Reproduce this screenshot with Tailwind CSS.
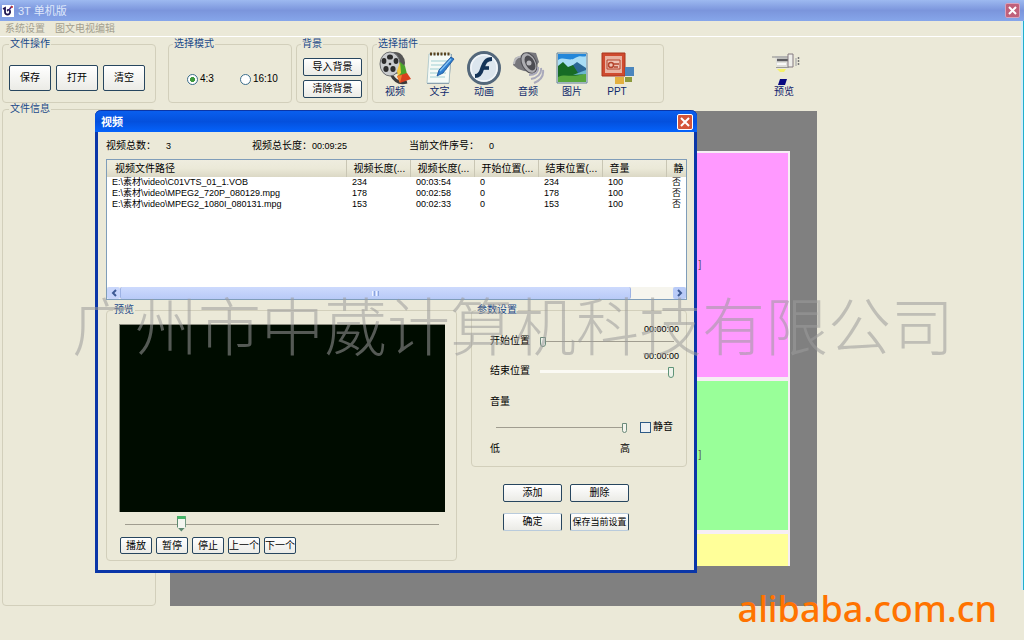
<!DOCTYPE html>
<html lang="zh-CN">
<head>
  <meta charset="UTF-8" />
  <title>3T 单机版</title>
  <meta name="viewport" content="width=device-width, initial-scale=1.0" />
  <script src="https://cdn.jsdelivr.net/npm/@tailwindcss/browser@4"></script>
</head>

<body class="relative flex flex-col h-screen overflow-hidden bg-[#ebe9d8] font-['Liberation_Sans','Noto_Sans_CJK_SC',sans-serif] text-[10px] leading-3 text-black">

  <!-- Title bar -->
  <header class="flex items-center h-[21px] shrink-0 px-[2px] gap-1 bg-linear-to-b from-[#9db9f0] via-[#7b95dc] to-[#86a6ea]">
    <svg class="w-3 h-3 bg-white" viewBox="0 0 12 12" fill="none">
      <path d="M1 4l2-1v4c0 4 6 3 5-1-1-2-3-1-2 0" stroke="#1d1450" stroke-width="1.8" />
      <path d="M7 5l3-4" stroke="#4a2a80" stroke-width="1.5" />
      <circle cx="10" cy="2" r="1" fill="#c33" />
    </svg>
    <h1 class="flex-1 text-[11px] text-[#dfe8fb]">3T 单机版</h1>
    <button aria-label="关闭" class="flex items-center justify-center w-[15px] h-[15px] mr-[2px] rounded-xs bg-[#c0607a] border border-[#d7a2bd]">
      <svg class="w-[9px] h-[9px]" viewBox="0 0 9 9" stroke="#fff" stroke-width="2"><path d="M1 1l7 7M8 1l-7 7" /></svg>
    </button>
  </header>

  <!-- Menu -->
  <nav class="flex items-center gap-[10px] h-4 shrink-0 px-[5px] text-[#a3a08f] border-b border-white">
    <a href="#">系统设置</a>
    <a href="#">图文电视编辑</a>
  </nav>

  <!-- Toolbar -->
  <div class="flex h-[66px] shrink-0 pl-[2px] pt-px">
    <fieldset class="w-[154px] border border-[#d2cfbb] rounded-sm">
      <legend class="ml-[6px] px-px text-[#1b4a8a]">文件操作</legend>
      <div class="flex gap-[5px] pl-[6px] pt-[15px]">
        <button class="w-[42px] h-[26px] border border-[#27465f] rounded-xs bg-linear-to-b from-white to-[#ebebe6]">保存</button>
        <button class="w-[42px] h-[26px] border border-[#27465f] rounded-xs bg-linear-to-b from-white to-[#ebebe6]">打开</button>
        <button class="w-[42px] h-[26px] border border-[#27465f] rounded-xs bg-linear-to-b from-white to-[#ebebe6]">清空</button>
      </div>
    </fieldset>

    <fieldset class="w-[124px] ml-3 border border-[#d2cfbb] rounded-sm">
      <legend class="ml-[4px] px-px text-[#1b4a8a]">选择模式</legend>
      <div class="flex gap-[26px] pl-[18px] pt-[23px]">
        <label class="flex items-center gap-[2px]">
          <input type="radio" name="mode" checked class="appearance-none w-[11px] h-[11px] rounded-full border border-[#3c6e8c] bg-radial from-[#3f9a3f] from-35% to-white to-45%" />4:3
        </label>
        <label class="flex items-center gap-[2px]">
          <input type="radio" name="mode" class="appearance-none w-[11px] h-[11px] rounded-full border border-[#3c6e8c] bg-white" />16:10
        </label>
      </div>
    </fieldset>

    <fieldset class="w-[72px] ml-1 border border-[#d2cfbb] rounded-sm">
      <legend class="ml-[4px] px-px text-[#1b4a8a]">背景</legend>
      <div class="flex flex-col gap-1 pl-[6px] pt-2">
        <button class="w-[59px] h-[18px] border border-[#27465f] rounded-xs bg-linear-to-b from-white to-[#ebebe6]">导入背景</button>
        <button class="w-[59px] h-[18px] border border-[#27465f] rounded-xs bg-linear-to-b from-white to-[#ebebe6]">清除背景</button>
      </div>
    </fieldset>

    <fieldset class="w-[292px] ml-1 border border-[#d2cfbb] rounded-sm">
      <legend class="ml-[4px] px-px text-[#1b4a8a]">选择插件</legend>
      <div class="flex pt-px text-[#0f2a6b]">
        <!-- Video -->
        <button class="flex flex-col items-center gap-px w-11">
          <svg class="w-[34px] h-[34px]" viewBox="0 0 34 34">
            <path d="M13 23c4 8 9 10 16 8" fill="none" stroke="#3b3b3b" stroke-width="3" />
            <ellipse cx="17" cy="12" rx="10" ry="11" fill="#555" />
            <ellipse cx="12" cy="13" rx="10" ry="12" fill="#c9cbcd" stroke="#6c6e70" />
            <g fill="#2c2c2c"><ellipse cx="12" cy="6" rx="3" ry="2.6" /><ellipse cx="6" cy="10" rx="2.4" ry="3" /><ellipse cx="18" cy="10" rx="2.4" ry="3" /><ellipse cx="8" cy="18" rx="2.6" ry="3" /><ellipse cx="15" cy="18" rx="2.6" ry="3" /><circle cx="12" cy="13" r="1.3" /></g>
            <path d="M22 11l5 4 2 8-9 2z" fill="#4aa52c" />
            <path d="M22 11l-3 9 1 5 3-3z" fill="#f0c93f" />
            <path d="M19 25l10-3 4 6-11 4z" fill="#d8401d" />
            <path d="M19 25l5-1-2 8z" fill="#f08030" />
          </svg>视频
        </button>
        <!-- Text -->
        <button class="flex flex-col items-center gap-px w-[45px]">
          <svg class="w-[34px] h-[34px]" viewBox="0 0 34 34">
            <path d="M7 3h22l-3 30H4z" fill="#8b9aa8" />
            <path d="M6 3h22l-2 29H4z" fill="#f5faf6" stroke="#8fb3bd" stroke-width=".6" />
            <path d="M8 10h18M8 14h17M7 18h17M7 22h16M7 26h15" stroke="#9fcfd4" />
            <path d="M7 3h21" stroke="#59431f" stroke-width="3" stroke-dasharray="2 1.5" />
            <path d="M31 8l-3-2-12 13-2 6 6-3z" fill="#2d7fd0" stroke="#174d94" stroke-width=".8" />
            <path d="M28 8L17 20" stroke="#85c3f4" stroke-width="1.3" />
          </svg>文字
        </button>
        <!-- Animation -->
        <button class="flex flex-col items-center gap-px w-[44px]">
          <svg class="w-[34px] h-[34px]" viewBox="0 0 34 34">
            <circle cx="17" cy="17" r="15.5" fill="#dce6ee" stroke="#54687b" stroke-width="3" />
            <circle cx="17" cy="17" r="13" fill="none" stroke="#f2f6f9" stroke-width="1.5" />
            <path d="M25 8c-7 0-8 5-10 10-1 4-3 7-7 7" fill="none" stroke="#143458" stroke-width="4" />
            <path d="M15 17h7" stroke="#143458" stroke-width="3.6" />
          </svg>动画
        </button>
        <!-- Audio -->
        <button class="flex flex-col items-center gap-px w-[44px]">
          <svg class="w-[34px] h-[34px]" viewBox="0 0 34 34" fill="none">
            <path d="M2 14l2-7 5-2 8-4 8 1 3 9-7 10-8-1-6-2z" fill="#77777c" />
            <path d="M3 13c0-5 4-8 8-7" stroke="#bcbcc0" stroke-width="2" />
            <ellipse cx="18" cy="12" rx="7" ry="11" transform="rotate(-28 18 12)" fill="#adadb1" stroke="#505056" />
            <ellipse cx="19" cy="12" rx="4.5" ry="8" transform="rotate(-28 19 12)" fill="#4d4d52" />
            <circle cx="18" cy="12" r="2.5" fill="#b9b9bd" />
            <path d="M27 16c1 5-3 8-9 8M30 17c1 6-4 10-10 11M32 19c1 7-4 11-9 13" stroke="#a9a9bb" stroke-width="2" />
          </svg>音频
        </button>
        <!-- Picture -->
        <button class="flex flex-col items-center gap-px w-[44px]">
          <svg class="w-[34px] h-[34px]" viewBox="0 0 34 34">
            <path d="M2 2h30v30H2z" fill="#dfe6e2" stroke="#61829b" />
            <path d="M3 3h28v15H3z" fill="#2287da" />
            <path d="M3 9c6-4 11 2 17-2s8 0 11-2v13H3z" fill="#a9ddf5" />
            <path d="M14 17l8-6 9 6v6H14z" fill="#2b6796" />
            <path d="M3 15l5-4 5 5 5-2 5 8 8-1v10H3z" fill="#176b25" />
            <path d="M3 26c8-4 14 2 28-4v9H3z" fill="#56a63c" />
            <path d="M18 24l13-5v4z" fill="#6bb7cf" />
          </svg>图片
        </button>
        <!-- PPT -->
        <button class="flex flex-col items-center gap-px w-[46px]">
          <svg class="w-[34px] h-[34px]" viewBox="0 0 34 34">
            <path d="M2 2h23v23H2z" fill="#cf4a2f" stroke="#a8361f" />
            <path d="M5 5h17v17H5z" fill="#e8b3a2" />
            <path d="M7 9h13v9H7z" fill="#efc4b5" stroke="#b4442c" />
            <circle cx="11" cy="14" r="2.5" fill="none" stroke="#b4442c" stroke-width="1.5" />
            <path d="M14 13h5M14 16h4" stroke="#b4442c" stroke-width="1.4" />
            <path d="M25 16h9v9h-9z" fill="#4b86bd" />
            <path d="M15 26h9v7h-9z" fill="#e3b040" />
            <path d="M25 26h7v5h-7z" fill="#8c9a3c" />
          </svg>PPT
        </button>
      </div>
    </fieldset>

    <button class="flex flex-col items-center ml-[103px] pt-[14px] self-start text-[#0f1a6b]">
      <svg class="w-[34px] h-[34px]" viewBox="0 0 34 34">
        <path d="M8 4h14v11H10l-1-5z" fill="#dedeD9" />
        <path d="M5 5h4M9 5h14" stroke="#8a8a8c" stroke-width="1" />
        <path d="M10 8h12" stroke="#5d5d61" stroke-width="2.5" />
        <path d="M10 12h9" stroke="#f8f8f8" stroke-width="2" />
        <path d="M21 2h5v13h-5z" fill="#eeeeea" stroke="#857a80" />
        <path d="M9 15.500h13" stroke="#999" />
        <path d="M29 6v8" stroke="#b5b5b5" stroke-width="1.5" />
        <path d="M31.500 5v9" stroke="#777" stroke-width="1.500" stroke-dasharray="2 1" />
        <path d="M10 17h9l-2 3h-4z" fill="#f4f06a" />
        <path d="M13 27h7l-2 6h-7z" fill="#0a0a82" />
      </svg>预览
    </button>
  </div>

  <!-- Workspace -->
  <main class="flex flex-1 pl-[2px] pb-[34px]">
    <fieldset class="w-[154px] border border-[#d2cfbb] rounded-sm">
      <legend class="ml-[6px] px-px text-[#1b4a8a]">文件信息</legend>
    </fieldset>

    <div class="flex justify-end w-[647px] ml-[14px] mt-2 pt-10 pr-[27px] pb-10 bg-[#808080]">
      <div class="flex flex-col w-[178px] pt-[2px] pr-[2px] gap-[4px] bg-[#f6eef4] text-[#555]">
        <div class="flex flex-[223] items-center justify-center bg-[#ff99ff]">]</div>
        <div class="flex flex-[149] items-center justify-center bg-[#99ff99]">]</div>
        <div class="flex-[32] bg-[#ffff99]"></div>
      </div>
    </div>
  </main>

  <!-- Video dialog -->
  <section class="absolute left-[95px] top-[110px] w-[602px] h-[463px] flex flex-col rounded-t-md bg-[#ebe9d8] border-[3px] border-t-0 border-[#0a36a8]">
    <div class="flex items-center justify-between h-[22px] shrink-0 -mx-[3px] pl-[6px] pr-1 rounded-t-md border-t border-[#0a36a8] bg-linear-to-b from-[#0a5fee] via-[#0450dd] to-[#0563fb]">
      <h2 class="text-[11px] font-bold text-white">视频</h2>
      <button aria-label="关闭" class="flex items-center justify-center w-4 h-4 rounded-xs border border-white bg-[#d4553a]">
        <svg class="w-[10px] h-[10px]" viewBox="0 0 10 10" stroke="#fff" stroke-width="2"><path d="M1 1l8 8M9 1l-8 8" /></svg>
      </button>
    </div>

    <div class="flex h-[27px] shrink-0 items-center pl-2">
      <p class="w-[146px]">视频总数：<span class="ml-[10px] text-[9px]">3</span></p>
      <p class="w-[157px]">视频总长度：<span class="text-[9px]">00:09:25</span></p>
      <p>当前文件序号：<span class="ml-[10px] text-[9px]">0</span></p>
    </div>

    <!-- File list -->
    <div class="flex flex-col h-[141px] shrink-0 ml-2 mr-[7px] bg-white border border-[#7f9db9]">
      <div class="flex-1 overflow-hidden">
        <table class="table-fixed w-full text-left text-[9px] leading-[11px] whitespace-nowrap">
          <thead class="text-[10px] bg-linear-to-b from-[#efeddf] via-[#ebe9d8] to-[#dbd8c5]">
            <tr class="h-[17px]">
              <th class="font-normal pl-2 border-r border-[#c9c6b4]">视频文件路径</th>
              <th class="w-16 font-normal pl-[7px] border-r border-[#c9c6b4]">视频长度(...</th>
              <th class="w-16 font-normal pl-[7px] border-r border-[#c9c6b4]">视频长度(...</th>
              <th class="w-16 font-normal pl-[7px] border-r border-[#c9c6b4]">开始位置(...</th>
              <th class="w-16 font-normal pl-[7px] border-r border-[#c9c6b4]">结束位置(...</th>
              <th class="w-16 font-normal pl-[7px] border-r border-[#c9c6b4]">音量</th>
              <th class="w-5 font-normal pl-[7px] overflow-hidden">静</th>
            </tr>
          </thead>
          <tbody>
            <tr>
              <td class="pl-[5px]">E:\素材\video\C01VTS_01_1.VOB</td>
              <td class="pl-[6px]">234</td><td class="pl-[6px]">00:03:54</td><td class="pl-[6px]">0</td><td class="pl-[6px]">234</td><td class="pl-[6px]">100</td><td class="pl-[6px]">否</td>
            </tr>
            <tr>
              <td class="pl-[5px]">E:\素材\video\MPEG2_720P_080129.mpg</td>
              <td class="pl-[6px]">178</td><td class="pl-[6px]">00:02:58</td><td class="pl-[6px]">0</td><td class="pl-[6px]">178</td><td class="pl-[6px]">100</td><td class="pl-[6px]">否</td>
            </tr>
            <tr>
              <td class="pl-[5px]">E:\素材\video\MPEG2_1080I_080131.mpg</td>
              <td class="pl-[6px]">153</td><td class="pl-[6px]">00:02:33</td><td class="pl-[6px]">0</td><td class="pl-[6px]">153</td><td class="pl-[6px]">100</td><td class="pl-[6px]">否</td>
            </tr>
          </tbody>
        </table>
      </div>
      <div class="flex h-3 shrink-0 bg-[#f6f5ee]">
        <button aria-label="向左" class="flex items-center justify-center w-[13px] rounded-xs bg-[#c8d6fb]">
          <svg class="w-2 h-2" viewBox="0 0 8 8" fill="none" stroke="#3d5a94" stroke-width="2"><path d="M6 1L3 4l3 3" /></svg>
        </button>
        <div class="flex items-center justify-center gap-px w-[511px] rounded-xs border-x border-[#9db2e4] bg-linear-to-b from-[#cddafd] to-[#b8caf7]">
          <i class="w-px h-[5px] bg-[#eef3ff]"></i><i class="w-px h-[5px] bg-[#8ba4df]"></i><i class="w-px h-[5px] bg-[#eef3ff]"></i><i class="w-px h-[5px] bg-[#8ba4df]"></i>
        </div>
        <div class="flex-1"></div>
        <button aria-label="向右" class="flex items-center justify-center w-[13px] rounded-xs bg-[#b9cbf8]">
          <svg class="w-2 h-2" viewBox="0 0 8 8" fill="none" stroke="#3d5a94" stroke-width="2"><path d="M2 1l3 3-3 3" /></svg>
        </button>
      </div>
    </div>

    <div class="flex pt-[4px] pl-2">
      <!-- Preview -->
      <fieldset class="w-[351px] h-[257px] border border-[#d2cfbb] rounded-sm">
        <legend class="ml-[6px] px-px text-[#1b4a8a]">预览</legend>
        <div class="h-[188px] ml-3 mr-[11px] mt-2 bg-[#000c00] border-t border-l border-[#8c8c80]"></div>
        <input type="range" aria-label="播放进度" min="0" max="100" value="17" class="block appearance-none bg-transparent w-[314px] h-4 ml-[18px] mt-1 [&::-webkit-slider-runnable-track]:h-px [&::-webkit-slider-runnable-track]:bg-[#a09d90] [&::-webkit-slider-thumb]:appearance-none [&::-webkit-slider-thumb]:w-[9px] [&::-webkit-slider-thumb]:h-4 [&::-webkit-slider-thumb]:-mt-2 [&::-webkit-slider-thumb]:bg-[#f3f6f0] [&::-webkit-slider-thumb]:border [&::-webkit-slider-thumb]:border-t-[3px] [&::-webkit-slider-thumb]:border-b-[4px] [&::-webkit-slider-thumb]:border-[#5d8a70] [&::-webkit-slider-thumb]:border-t-[#46b567] [&::-webkit-slider-thumb]:[clip-path:polygon(0_0,100%_0,100%_70%,50%_100%,0_70%)]" />
        <div class="flex gap-1 ml-[13px] mt-[5px]">
          <button class="w-8 h-[17px] border border-[#27465f] rounded-xs bg-linear-to-b from-white to-[#ebebe6] whitespace-nowrap">播放</button>
          <button class="w-8 h-[17px] border border-[#27465f] rounded-xs bg-linear-to-b from-white to-[#ebebe6] whitespace-nowrap">暂停</button>
          <button class="w-8 h-[17px] border border-[#27465f] rounded-xs bg-linear-to-b from-white to-[#ebebe6] whitespace-nowrap">停止</button>
          <button class="w-8 h-[17px] border border-[#27465f] rounded-xs bg-linear-to-b from-white to-[#ebebe6] whitespace-nowrap">上一个</button>
          <button class="w-8 h-[17px] border border-[#27465f] rounded-xs bg-linear-to-b from-white to-[#ebebe6] whitespace-nowrap">下一个</button>
        </div>
      </fieldset>

      <!-- Parameters -->
      <div class="ml-[14px]">
        <fieldset class="w-[216px] h-[163px] border border-[#d2cfbb] rounded-sm">
          <legend class="ml-[4px] px-px text-[#1b4a8a]">参数设置</legend>
          <div class="pl-[18px] pr-[7px] pt-[7px]">
            <p class="text-[9px] leading-3 text-right">00:00:00</p>
            <div class="flex items-start gap-[10px] h-[15px]">
              <label for="start">开始位置</label>
              <input id="start" type="range" min="0" max="100" value="0" class="block appearance-none bg-transparent w-[134px] h-3 [&::-webkit-slider-runnable-track]:h-px [&::-webkit-slider-runnable-track]:bg-[#a09d90] [&::-webkit-slider-thumb]:appearance-none [&::-webkit-slider-thumb]:w-[6px] [&::-webkit-slider-thumb]:h-[10px] [&::-webkit-slider-thumb]:-mt-1 [&::-webkit-slider-thumb]:bg-[#eef2ea] [&::-webkit-slider-thumb]:border [&::-webkit-slider-thumb]:border-[#6b8a7a] [&::-webkit-slider-thumb]:rounded-b-full" />
            </div>
            <p class="text-[9px] leading-3 text-right">00:00:00</p>
            <div class="flex items-center gap-[10px] h-[18px]">
              <label for="end">结束位置</label>
              <input id="end" type="range" min="0" max="100" value="100" class="block appearance-none bg-transparent w-[134px] h-3 [&::-webkit-slider-runnable-track]:h-[3px] [&::-webkit-slider-runnable-track]:bg-[#fbfaf4] [&::-webkit-slider-thumb]:appearance-none [&::-webkit-slider-thumb]:w-[6px] [&::-webkit-slider-thumb]:h-[11px] [&::-webkit-slider-thumb]:-mt-[3px] [&::-webkit-slider-thumb]:bg-[#eef2ea] [&::-webkit-slider-thumb]:border [&::-webkit-slider-thumb]:border-[#5f9478] [&::-webkit-slider-thumb]:rounded-b-full" />
            </div>
            <label for="volume" class="block pt-4">音量</label>
            <div class="flex items-center h-4 mt-[11px]">
              <input id="volume" type="range" min="0" max="100" value="100" class="block appearance-none bg-transparent w-[131px] h-3 ml-[6px] [&::-webkit-slider-runnable-track]:h-px [&::-webkit-slider-runnable-track]:bg-[#a09d90] [&::-webkit-slider-thumb]:appearance-none [&::-webkit-slider-thumb]:w-[5px] [&::-webkit-slider-thumb]:h-[10px] [&::-webkit-slider-thumb]:-mt-1 [&::-webkit-slider-thumb]:bg-[#f3f4ec] [&::-webkit-slider-thumb]:border [&::-webkit-slider-thumb]:border-[#6b8a7a] [&::-webkit-slider-thumb]:rounded-b-full" />
              <label class="flex items-center gap-[2px] ml-[13px]">
                <input type="checkbox" class="appearance-none w-[11px] h-[11px] border border-[#2d5a86] bg-[#eef1f2]" />静音
              </label>
            </div>
            <div class="flex justify-between w-[140px] mt-2"><span>低</span><span>高</span></div>
          </div>
        </fieldset>

        <div class="grid grid-cols-[59px_59px] gap-x-2 gap-y-[11px] ml-8 mt-[17px]">
          <button class="h-[18px] border border-[#27465f] rounded-xs bg-linear-to-b from-white to-[#ebebe6]">添加</button>
          <button class="h-[18px] border border-[#27465f] rounded-xs bg-linear-to-b from-white to-[#ebebe6]">删除</button>
          <button class="h-[18px] border border-[#27465f] border-y-[#b9cbdc] rounded-xs bg-linear-to-b from-white to-[#ebebe6]">确定</button>
          <button class="flex items-center justify-center h-[18px] border border-[#27465f] border-y-[#b9cbdc] rounded-xs bg-linear-to-b from-white to-[#ebebe6] text-[9px] whitespace-nowrap">保存当前设置</button>
        </div>
      </div>
    </div>
  </section>

  <!-- Window edge -->
  <div class="absolute right-0 top-[21px] bottom-[50px] w-[3px] bg-[#d5ecf6] border-r border-[#1fb0cf]"></div>

  <!-- Watermarks -->
  <p class="absolute left-[72px] top-[291px] whitespace-nowrap font-['Noto_Sans_CJK_SC',sans-serif] font-light text-[63px] leading-[64px] text-[#9b9b9b]/55 pointer-events-none">广州市中葳计算机科技有限公司</p>
  <p class="absolute right-[27px] bottom-[9px] font-['Noto_Sans',sans-serif] font-medium text-[36px] leading-[44px] text-[#ff7300] pointer-events-none">alibaba.com.cn</p>
</body>
</html>
